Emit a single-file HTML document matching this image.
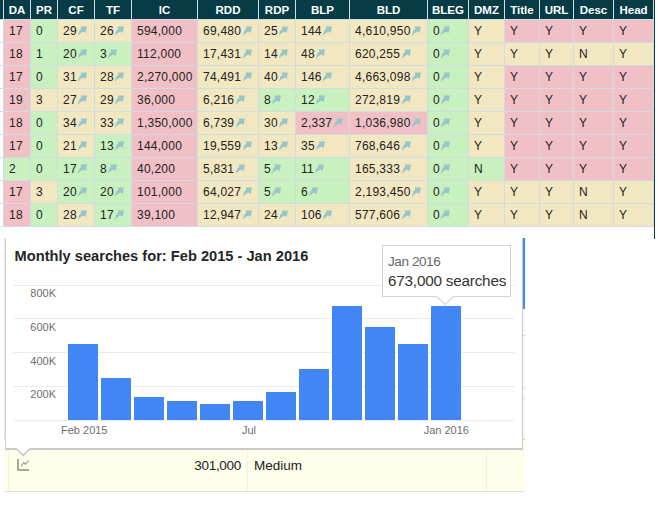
<!DOCTYPE html>
<html><head><meta charset="utf-8"><style>
*{margin:0;padding:0;box-sizing:border-box}
html,body{width:658px;height:514px;overflow:hidden;background:#fff;font-family:"Liberation Sans",sans-serif;position:relative}
.a{position:absolute}
.h{position:absolute;top:0;height:19px;background:#073c47;color:#fff;font-weight:bold;font-size:11.5px;line-height:20px;text-align:center;white-space:nowrap}
.c{position:absolute;height:22px;font-size:12px;line-height:22px;color:#222;padding-left:5px;letter-spacing:0.25px;white-space:nowrap}
.ar{display:inline-block;vertical-align:top;margin-top:6px;margin-left:1.5px}
</style></head><body>

<div class="a" style="left:0;top:0;width:654px;height:227px;background:#d0dbe2"></div>
<div class="a" style="left:0;top:0;width:3px;height:19px;background:#073c47"></div>
<div class="a" style="left:654px;top:0;width:1px;height:239px;background:#073c47"></div>
<div class="h" style="left:4px;width:26px">DA</div>
<div class="h" style="left:31px;width:26px">PR</div>
<div class="h" style="left:58px;width:36px">CF</div>
<div class="h" style="left:95px;width:36px">TF</div>
<div class="h" style="left:132px;width:65px">IC</div>
<div class="h" style="left:198px;width:60px">RDD</div>
<div class="h" style="left:259px;width:36px">RDP</div>
<div class="h" style="left:296px;width:53px">BLP</div>
<div class="h" style="left:350px;width:77px">BLD</div>
<div class="h" style="left:428px;width:40px">BLEG</div>
<div class="h" style="left:469px;width:35px">DMZ</div>
<div class="h" style="left:505px;width:34px">Title</div>
<div class="h" style="left:540px;width:33px">URL</div>
<div class="h" style="left:574px;width:39px">Desc</div>
<div class="h" style="left:614px;width:39px">Head</div>
<div class="a" style="left:0;top:20px;width:3px;height:22px;background:#fff"></div>
<div class="c" style="left:4px;top:20px;width:26px;background:#f1c0c7">17</div>
<div class="c" style="left:31px;top:20px;width:26px;background:#c9f1c0">0</div>
<div class="c" style="left:58px;top:20px;width:36px;background:#f1e7c0">29<svg class="ar" width="10" height="10" viewBox="0 0 10 10"><path d="M2.5,0.5 L9,0.5 L7.6,7 L5.5,5.5 C3.8,6.2 1.6,7.5 0.3,9.9 C0.1,6.5 1.5,4.1 3.4,2.6 Z" fill="#98c5c8"/></svg></div>
<div class="c" style="left:95px;top:20px;width:36px;background:#f1e7c0">26<svg class="ar" width="10" height="10" viewBox="0 0 10 10"><path d="M2.5,0.5 L9,0.5 L7.6,7 L5.5,5.5 C3.8,6.2 1.6,7.5 0.3,9.9 C0.1,6.5 1.5,4.1 3.4,2.6 Z" fill="#98c5c8"/></svg></div>
<div class="c" style="left:132px;top:20px;width:65px;background:#f1c0c7">594,000</div>
<div class="c" style="left:198px;top:20px;width:60px;background:#f1e7c0">69,480<svg class="ar" width="10" height="10" viewBox="0 0 10 10"><path d="M2.5,0.5 L9,0.5 L7.6,7 L5.5,5.5 C3.8,6.2 1.6,7.5 0.3,9.9 C0.1,6.5 1.5,4.1 3.4,2.6 Z" fill="#98c5c8"/></svg></div>
<div class="c" style="left:259px;top:20px;width:36px;background:#f1e7c0">25<svg class="ar" width="10" height="10" viewBox="0 0 10 10"><path d="M2.5,0.5 L9,0.5 L7.6,7 L5.5,5.5 C3.8,6.2 1.6,7.5 0.3,9.9 C0.1,6.5 1.5,4.1 3.4,2.6 Z" fill="#98c5c8"/></svg></div>
<div class="c" style="left:296px;top:20px;width:53px;background:#f1e7c0">144<svg class="ar" width="10" height="10" viewBox="0 0 10 10"><path d="M2.5,0.5 L9,0.5 L7.6,7 L5.5,5.5 C3.8,6.2 1.6,7.5 0.3,9.9 C0.1,6.5 1.5,4.1 3.4,2.6 Z" fill="#98c5c8"/></svg></div>
<div class="c" style="left:350px;top:20px;width:77px;background:#f1e7c0">4,610,950<svg class="ar" width="10" height="10" viewBox="0 0 10 10"><path d="M2.5,0.5 L9,0.5 L7.6,7 L5.5,5.5 C3.8,6.2 1.6,7.5 0.3,9.9 C0.1,6.5 1.5,4.1 3.4,2.6 Z" fill="#98c5c8"/></svg></div>
<div class="c" style="left:428px;top:20px;width:40px;background:#c9f1c0">0<svg class="ar" width="10" height="10" viewBox="0 0 10 10"><path d="M2.5,0.5 L9,0.5 L7.6,7 L5.5,5.5 C3.8,6.2 1.6,7.5 0.3,9.9 C0.1,6.5 1.5,4.1 3.4,2.6 Z" fill="#98c5c8"/></svg></div>
<div class="c" style="left:469px;top:20px;width:35px;background:#f1e7c0">Y</div>
<div class="c" style="left:505px;top:20px;width:34px;background:#f1c0c7">Y</div>
<div class="c" style="left:540px;top:20px;width:33px;background:#f1c0c7">Y</div>
<div class="c" style="left:574px;top:20px;width:39px;background:#f1c0c7">Y</div>
<div class="c" style="left:614px;top:20px;width:39px;background:#f1c0c7">Y</div>
<div class="a" style="left:0;top:43px;width:3px;height:22px;background:#fff"></div>
<div class="c" style="left:4px;top:43px;width:26px;background:#f1c0c7">18</div>
<div class="c" style="left:31px;top:43px;width:26px;background:#c9f1c0">1</div>
<div class="c" style="left:58px;top:43px;width:36px;background:#c9f1c0">20<svg class="ar" width="10" height="10" viewBox="0 0 10 10"><path d="M2.5,0.5 L9,0.5 L7.6,7 L5.5,5.5 C3.8,6.2 1.6,7.5 0.3,9.9 C0.1,6.5 1.5,4.1 3.4,2.6 Z" fill="#98c5c8"/></svg></div>
<div class="c" style="left:95px;top:43px;width:36px;background:#c9f1c0">3<svg class="ar" width="10" height="10" viewBox="0 0 10 10"><path d="M2.5,0.5 L9,0.5 L7.6,7 L5.5,5.5 C3.8,6.2 1.6,7.5 0.3,9.9 C0.1,6.5 1.5,4.1 3.4,2.6 Z" fill="#98c5c8"/></svg></div>
<div class="c" style="left:132px;top:43px;width:65px;background:#f1c0c7">112,000</div>
<div class="c" style="left:198px;top:43px;width:60px;background:#f1e7c0">17,431<svg class="ar" width="10" height="10" viewBox="0 0 10 10"><path d="M2.5,0.5 L9,0.5 L7.6,7 L5.5,5.5 C3.8,6.2 1.6,7.5 0.3,9.9 C0.1,6.5 1.5,4.1 3.4,2.6 Z" fill="#98c5c8"/></svg></div>
<div class="c" style="left:259px;top:43px;width:36px;background:#f1e7c0">14<svg class="ar" width="10" height="10" viewBox="0 0 10 10"><path d="M2.5,0.5 L9,0.5 L7.6,7 L5.5,5.5 C3.8,6.2 1.6,7.5 0.3,9.9 C0.1,6.5 1.5,4.1 3.4,2.6 Z" fill="#98c5c8"/></svg></div>
<div class="c" style="left:296px;top:43px;width:53px;background:#f1e7c0">48<svg class="ar" width="10" height="10" viewBox="0 0 10 10"><path d="M2.5,0.5 L9,0.5 L7.6,7 L5.5,5.5 C3.8,6.2 1.6,7.5 0.3,9.9 C0.1,6.5 1.5,4.1 3.4,2.6 Z" fill="#98c5c8"/></svg></div>
<div class="c" style="left:350px;top:43px;width:77px;background:#f1e7c0">620,255<svg class="ar" width="10" height="10" viewBox="0 0 10 10"><path d="M2.5,0.5 L9,0.5 L7.6,7 L5.5,5.5 C3.8,6.2 1.6,7.5 0.3,9.9 C0.1,6.5 1.5,4.1 3.4,2.6 Z" fill="#98c5c8"/></svg></div>
<div class="c" style="left:428px;top:43px;width:40px;background:#c9f1c0">0<svg class="ar" width="10" height="10" viewBox="0 0 10 10"><path d="M2.5,0.5 L9,0.5 L7.6,7 L5.5,5.5 C3.8,6.2 1.6,7.5 0.3,9.9 C0.1,6.5 1.5,4.1 3.4,2.6 Z" fill="#98c5c8"/></svg></div>
<div class="c" style="left:469px;top:43px;width:35px;background:#f1e7c0">Y</div>
<div class="c" style="left:505px;top:43px;width:34px;background:#f1e7c0">Y</div>
<div class="c" style="left:540px;top:43px;width:33px;background:#f1e7c0">Y</div>
<div class="c" style="left:574px;top:43px;width:39px;background:#f1e7c0">N</div>
<div class="c" style="left:614px;top:43px;width:39px;background:#f1e7c0">Y</div>
<div class="a" style="left:0;top:66px;width:3px;height:22px;background:#fff"></div>
<div class="c" style="left:4px;top:66px;width:26px;background:#f1c0c7">17</div>
<div class="c" style="left:31px;top:66px;width:26px;background:#c9f1c0">0</div>
<div class="c" style="left:58px;top:66px;width:36px;background:#f1e7c0">31<svg class="ar" width="10" height="10" viewBox="0 0 10 10"><path d="M2.5,0.5 L9,0.5 L7.6,7 L5.5,5.5 C3.8,6.2 1.6,7.5 0.3,9.9 C0.1,6.5 1.5,4.1 3.4,2.6 Z" fill="#98c5c8"/></svg></div>
<div class="c" style="left:95px;top:66px;width:36px;background:#f1e7c0">28<svg class="ar" width="10" height="10" viewBox="0 0 10 10"><path d="M2.5,0.5 L9,0.5 L7.6,7 L5.5,5.5 C3.8,6.2 1.6,7.5 0.3,9.9 C0.1,6.5 1.5,4.1 3.4,2.6 Z" fill="#98c5c8"/></svg></div>
<div class="c" style="left:132px;top:66px;width:65px;background:#f1c0c7">2,270,000</div>
<div class="c" style="left:198px;top:66px;width:60px;background:#f1e7c0">74,491<svg class="ar" width="10" height="10" viewBox="0 0 10 10"><path d="M2.5,0.5 L9,0.5 L7.6,7 L5.5,5.5 C3.8,6.2 1.6,7.5 0.3,9.9 C0.1,6.5 1.5,4.1 3.4,2.6 Z" fill="#98c5c8"/></svg></div>
<div class="c" style="left:259px;top:66px;width:36px;background:#f1e7c0">40<svg class="ar" width="10" height="10" viewBox="0 0 10 10"><path d="M2.5,0.5 L9,0.5 L7.6,7 L5.5,5.5 C3.8,6.2 1.6,7.5 0.3,9.9 C0.1,6.5 1.5,4.1 3.4,2.6 Z" fill="#98c5c8"/></svg></div>
<div class="c" style="left:296px;top:66px;width:53px;background:#f1e7c0">146<svg class="ar" width="10" height="10" viewBox="0 0 10 10"><path d="M2.5,0.5 L9,0.5 L7.6,7 L5.5,5.5 C3.8,6.2 1.6,7.5 0.3,9.9 C0.1,6.5 1.5,4.1 3.4,2.6 Z" fill="#98c5c8"/></svg></div>
<div class="c" style="left:350px;top:66px;width:77px;background:#f1e7c0">4,663,098<svg class="ar" width="10" height="10" viewBox="0 0 10 10"><path d="M2.5,0.5 L9,0.5 L7.6,7 L5.5,5.5 C3.8,6.2 1.6,7.5 0.3,9.9 C0.1,6.5 1.5,4.1 3.4,2.6 Z" fill="#98c5c8"/></svg></div>
<div class="c" style="left:428px;top:66px;width:40px;background:#c9f1c0">0<svg class="ar" width="10" height="10" viewBox="0 0 10 10"><path d="M2.5,0.5 L9,0.5 L7.6,7 L5.5,5.5 C3.8,6.2 1.6,7.5 0.3,9.9 C0.1,6.5 1.5,4.1 3.4,2.6 Z" fill="#98c5c8"/></svg></div>
<div class="c" style="left:469px;top:66px;width:35px;background:#f1e7c0">Y</div>
<div class="c" style="left:505px;top:66px;width:34px;background:#f1c0c7">Y</div>
<div class="c" style="left:540px;top:66px;width:33px;background:#f1c0c7">Y</div>
<div class="c" style="left:574px;top:66px;width:39px;background:#f1c0c7">Y</div>
<div class="c" style="left:614px;top:66px;width:39px;background:#f1c0c7">Y</div>
<div class="a" style="left:0;top:89px;width:3px;height:22px;background:#fff"></div>
<div class="c" style="left:4px;top:89px;width:26px;background:#f1c0c7">19</div>
<div class="c" style="left:31px;top:89px;width:26px;background:#f1e7c0">3</div>
<div class="c" style="left:58px;top:89px;width:36px;background:#f1e7c0">27<svg class="ar" width="10" height="10" viewBox="0 0 10 10"><path d="M2.5,0.5 L9,0.5 L7.6,7 L5.5,5.5 C3.8,6.2 1.6,7.5 0.3,9.9 C0.1,6.5 1.5,4.1 3.4,2.6 Z" fill="#98c5c8"/></svg></div>
<div class="c" style="left:95px;top:89px;width:36px;background:#f1e7c0">29<svg class="ar" width="10" height="10" viewBox="0 0 10 10"><path d="M2.5,0.5 L9,0.5 L7.6,7 L5.5,5.5 C3.8,6.2 1.6,7.5 0.3,9.9 C0.1,6.5 1.5,4.1 3.4,2.6 Z" fill="#98c5c8"/></svg></div>
<div class="c" style="left:132px;top:89px;width:65px;background:#f1c0c7">36,000</div>
<div class="c" style="left:198px;top:89px;width:60px;background:#f1e7c0">6,216<svg class="ar" width="10" height="10" viewBox="0 0 10 10"><path d="M2.5,0.5 L9,0.5 L7.6,7 L5.5,5.5 C3.8,6.2 1.6,7.5 0.3,9.9 C0.1,6.5 1.5,4.1 3.4,2.6 Z" fill="#98c5c8"/></svg></div>
<div class="c" style="left:259px;top:89px;width:36px;background:#c9f1c0">8<svg class="ar" width="10" height="10" viewBox="0 0 10 10"><path d="M2.5,0.5 L9,0.5 L7.6,7 L5.5,5.5 C3.8,6.2 1.6,7.5 0.3,9.9 C0.1,6.5 1.5,4.1 3.4,2.6 Z" fill="#98c5c8"/></svg></div>
<div class="c" style="left:296px;top:89px;width:53px;background:#c9f1c0">12<svg class="ar" width="10" height="10" viewBox="0 0 10 10"><path d="M2.5,0.5 L9,0.5 L7.6,7 L5.5,5.5 C3.8,6.2 1.6,7.5 0.3,9.9 C0.1,6.5 1.5,4.1 3.4,2.6 Z" fill="#98c5c8"/></svg></div>
<div class="c" style="left:350px;top:89px;width:77px;background:#f1e7c0">272,819<svg class="ar" width="10" height="10" viewBox="0 0 10 10"><path d="M2.5,0.5 L9,0.5 L7.6,7 L5.5,5.5 C3.8,6.2 1.6,7.5 0.3,9.9 C0.1,6.5 1.5,4.1 3.4,2.6 Z" fill="#98c5c8"/></svg></div>
<div class="c" style="left:428px;top:89px;width:40px;background:#c9f1c0">0<svg class="ar" width="10" height="10" viewBox="0 0 10 10"><path d="M2.5,0.5 L9,0.5 L7.6,7 L5.5,5.5 C3.8,6.2 1.6,7.5 0.3,9.9 C0.1,6.5 1.5,4.1 3.4,2.6 Z" fill="#98c5c8"/></svg></div>
<div class="c" style="left:469px;top:89px;width:35px;background:#f1e7c0">Y</div>
<div class="c" style="left:505px;top:89px;width:34px;background:#f1c0c7">Y</div>
<div class="c" style="left:540px;top:89px;width:33px;background:#f1c0c7">Y</div>
<div class="c" style="left:574px;top:89px;width:39px;background:#f1c0c7">Y</div>
<div class="c" style="left:614px;top:89px;width:39px;background:#f1c0c7">Y</div>
<div class="a" style="left:0;top:112px;width:3px;height:22px;background:#fff"></div>
<div class="c" style="left:4px;top:112px;width:26px;background:#f1c0c7">18</div>
<div class="c" style="left:31px;top:112px;width:26px;background:#c9f1c0">0</div>
<div class="c" style="left:58px;top:112px;width:36px;background:#f1e7c0">34<svg class="ar" width="10" height="10" viewBox="0 0 10 10"><path d="M2.5,0.5 L9,0.5 L7.6,7 L5.5,5.5 C3.8,6.2 1.6,7.5 0.3,9.9 C0.1,6.5 1.5,4.1 3.4,2.6 Z" fill="#98c5c8"/></svg></div>
<div class="c" style="left:95px;top:112px;width:36px;background:#f1e7c0">33<svg class="ar" width="10" height="10" viewBox="0 0 10 10"><path d="M2.5,0.5 L9,0.5 L7.6,7 L5.5,5.5 C3.8,6.2 1.6,7.5 0.3,9.9 C0.1,6.5 1.5,4.1 3.4,2.6 Z" fill="#98c5c8"/></svg></div>
<div class="c" style="left:132px;top:112px;width:65px;background:#f1c0c7">1,350,000</div>
<div class="c" style="left:198px;top:112px;width:60px;background:#f1e7c0">6,739<svg class="ar" width="10" height="10" viewBox="0 0 10 10"><path d="M2.5,0.5 L9,0.5 L7.6,7 L5.5,5.5 C3.8,6.2 1.6,7.5 0.3,9.9 C0.1,6.5 1.5,4.1 3.4,2.6 Z" fill="#98c5c8"/></svg></div>
<div class="c" style="left:259px;top:112px;width:36px;background:#f1e7c0">30<svg class="ar" width="10" height="10" viewBox="0 0 10 10"><path d="M2.5,0.5 L9,0.5 L7.6,7 L5.5,5.5 C3.8,6.2 1.6,7.5 0.3,9.9 C0.1,6.5 1.5,4.1 3.4,2.6 Z" fill="#98c5c8"/></svg></div>
<div class="c" style="left:296px;top:112px;width:53px;background:#f1c0c7">2,337<svg class="ar" width="10" height="10" viewBox="0 0 10 10"><path d="M2.5,0.5 L9,0.5 L7.6,7 L5.5,5.5 C3.8,6.2 1.6,7.5 0.3,9.9 C0.1,6.5 1.5,4.1 3.4,2.6 Z" fill="#98c5c8"/></svg></div>
<div class="c" style="left:350px;top:112px;width:77px;background:#f1c0c7">1,036,980<svg class="ar" width="10" height="10" viewBox="0 0 10 10"><path d="M2.5,0.5 L9,0.5 L7.6,7 L5.5,5.5 C3.8,6.2 1.6,7.5 0.3,9.9 C0.1,6.5 1.5,4.1 3.4,2.6 Z" fill="#98c5c8"/></svg></div>
<div class="c" style="left:428px;top:112px;width:40px;background:#c9f1c0">0<svg class="ar" width="10" height="10" viewBox="0 0 10 10"><path d="M2.5,0.5 L9,0.5 L7.6,7 L5.5,5.5 C3.8,6.2 1.6,7.5 0.3,9.9 C0.1,6.5 1.5,4.1 3.4,2.6 Z" fill="#98c5c8"/></svg></div>
<div class="c" style="left:469px;top:112px;width:35px;background:#f1e7c0">Y</div>
<div class="c" style="left:505px;top:112px;width:34px;background:#f1c0c7">Y</div>
<div class="c" style="left:540px;top:112px;width:33px;background:#f1c0c7">Y</div>
<div class="c" style="left:574px;top:112px;width:39px;background:#f1c0c7">Y</div>
<div class="c" style="left:614px;top:112px;width:39px;background:#f1c0c7">Y</div>
<div class="a" style="left:0;top:135px;width:3px;height:22px;background:#fff"></div>
<div class="c" style="left:4px;top:135px;width:26px;background:#f1c0c7">17</div>
<div class="c" style="left:31px;top:135px;width:26px;background:#c9f1c0">0</div>
<div class="c" style="left:58px;top:135px;width:36px;background:#f1e7c0">21<svg class="ar" width="10" height="10" viewBox="0 0 10 10"><path d="M2.5,0.5 L9,0.5 L7.6,7 L5.5,5.5 C3.8,6.2 1.6,7.5 0.3,9.9 C0.1,6.5 1.5,4.1 3.4,2.6 Z" fill="#98c5c8"/></svg></div>
<div class="c" style="left:95px;top:135px;width:36px;background:#c9f1c0">13<svg class="ar" width="10" height="10" viewBox="0 0 10 10"><path d="M2.5,0.5 L9,0.5 L7.6,7 L5.5,5.5 C3.8,6.2 1.6,7.5 0.3,9.9 C0.1,6.5 1.5,4.1 3.4,2.6 Z" fill="#98c5c8"/></svg></div>
<div class="c" style="left:132px;top:135px;width:65px;background:#f1c0c7">144,000</div>
<div class="c" style="left:198px;top:135px;width:60px;background:#f1e7c0">19,559<svg class="ar" width="10" height="10" viewBox="0 0 10 10"><path d="M2.5,0.5 L9,0.5 L7.6,7 L5.5,5.5 C3.8,6.2 1.6,7.5 0.3,9.9 C0.1,6.5 1.5,4.1 3.4,2.6 Z" fill="#98c5c8"/></svg></div>
<div class="c" style="left:259px;top:135px;width:36px;background:#f1e7c0">13<svg class="ar" width="10" height="10" viewBox="0 0 10 10"><path d="M2.5,0.5 L9,0.5 L7.6,7 L5.5,5.5 C3.8,6.2 1.6,7.5 0.3,9.9 C0.1,6.5 1.5,4.1 3.4,2.6 Z" fill="#98c5c8"/></svg></div>
<div class="c" style="left:296px;top:135px;width:53px;background:#f1e7c0">35<svg class="ar" width="10" height="10" viewBox="0 0 10 10"><path d="M2.5,0.5 L9,0.5 L7.6,7 L5.5,5.5 C3.8,6.2 1.6,7.5 0.3,9.9 C0.1,6.5 1.5,4.1 3.4,2.6 Z" fill="#98c5c8"/></svg></div>
<div class="c" style="left:350px;top:135px;width:77px;background:#f1e7c0">768,646<svg class="ar" width="10" height="10" viewBox="0 0 10 10"><path d="M2.5,0.5 L9,0.5 L7.6,7 L5.5,5.5 C3.8,6.2 1.6,7.5 0.3,9.9 C0.1,6.5 1.5,4.1 3.4,2.6 Z" fill="#98c5c8"/></svg></div>
<div class="c" style="left:428px;top:135px;width:40px;background:#c9f1c0">0<svg class="ar" width="10" height="10" viewBox="0 0 10 10"><path d="M2.5,0.5 L9,0.5 L7.6,7 L5.5,5.5 C3.8,6.2 1.6,7.5 0.3,9.9 C0.1,6.5 1.5,4.1 3.4,2.6 Z" fill="#98c5c8"/></svg></div>
<div class="c" style="left:469px;top:135px;width:35px;background:#f1e7c0">Y</div>
<div class="c" style="left:505px;top:135px;width:34px;background:#f1c0c7">Y</div>
<div class="c" style="left:540px;top:135px;width:33px;background:#f1c0c7">Y</div>
<div class="c" style="left:574px;top:135px;width:39px;background:#f1c0c7">Y</div>
<div class="c" style="left:614px;top:135px;width:39px;background:#f1c0c7">Y</div>
<div class="a" style="left:0;top:158px;width:3px;height:22px;background:#fff"></div>
<div class="c" style="left:4px;top:158px;width:26px;background:#c9f1c0">2</div>
<div class="c" style="left:31px;top:158px;width:26px;background:#c9f1c0">0</div>
<div class="c" style="left:58px;top:158px;width:36px;background:#c9f1c0">17<svg class="ar" width="10" height="10" viewBox="0 0 10 10"><path d="M2.5,0.5 L9,0.5 L7.6,7 L5.5,5.5 C3.8,6.2 1.6,7.5 0.3,9.9 C0.1,6.5 1.5,4.1 3.4,2.6 Z" fill="#98c5c8"/></svg></div>
<div class="c" style="left:95px;top:158px;width:36px;background:#c9f1c0">8<svg class="ar" width="10" height="10" viewBox="0 0 10 10"><path d="M2.5,0.5 L9,0.5 L7.6,7 L5.5,5.5 C3.8,6.2 1.6,7.5 0.3,9.9 C0.1,6.5 1.5,4.1 3.4,2.6 Z" fill="#98c5c8"/></svg></div>
<div class="c" style="left:132px;top:158px;width:65px;background:#f1c0c7">40,200</div>
<div class="c" style="left:198px;top:158px;width:60px;background:#f1e7c0">5,831<svg class="ar" width="10" height="10" viewBox="0 0 10 10"><path d="M2.5,0.5 L9,0.5 L7.6,7 L5.5,5.5 C3.8,6.2 1.6,7.5 0.3,9.9 C0.1,6.5 1.5,4.1 3.4,2.6 Z" fill="#98c5c8"/></svg></div>
<div class="c" style="left:259px;top:158px;width:36px;background:#c9f1c0">5<svg class="ar" width="10" height="10" viewBox="0 0 10 10"><path d="M2.5,0.5 L9,0.5 L7.6,7 L5.5,5.5 C3.8,6.2 1.6,7.5 0.3,9.9 C0.1,6.5 1.5,4.1 3.4,2.6 Z" fill="#98c5c8"/></svg></div>
<div class="c" style="left:296px;top:158px;width:53px;background:#c9f1c0">11<svg class="ar" width="10" height="10" viewBox="0 0 10 10"><path d="M2.5,0.5 L9,0.5 L7.6,7 L5.5,5.5 C3.8,6.2 1.6,7.5 0.3,9.9 C0.1,6.5 1.5,4.1 3.4,2.6 Z" fill="#98c5c8"/></svg></div>
<div class="c" style="left:350px;top:158px;width:77px;background:#f1e7c0">165,333<svg class="ar" width="10" height="10" viewBox="0 0 10 10"><path d="M2.5,0.5 L9,0.5 L7.6,7 L5.5,5.5 C3.8,6.2 1.6,7.5 0.3,9.9 C0.1,6.5 1.5,4.1 3.4,2.6 Z" fill="#98c5c8"/></svg></div>
<div class="c" style="left:428px;top:158px;width:40px;background:#c9f1c0">0<svg class="ar" width="10" height="10" viewBox="0 0 10 10"><path d="M2.5,0.5 L9,0.5 L7.6,7 L5.5,5.5 C3.8,6.2 1.6,7.5 0.3,9.9 C0.1,6.5 1.5,4.1 3.4,2.6 Z" fill="#98c5c8"/></svg></div>
<div class="c" style="left:469px;top:158px;width:35px;background:#c9f1c0">N</div>
<div class="c" style="left:505px;top:158px;width:34px;background:#f1c0c7">Y</div>
<div class="c" style="left:540px;top:158px;width:33px;background:#f1c0c7">Y</div>
<div class="c" style="left:574px;top:158px;width:39px;background:#f1c0c7">Y</div>
<div class="c" style="left:614px;top:158px;width:39px;background:#f1c0c7">Y</div>
<div class="a" style="left:0;top:181px;width:3px;height:22px;background:#fff"></div>
<div class="c" style="left:4px;top:181px;width:26px;background:#f1c0c7">17</div>
<div class="c" style="left:31px;top:181px;width:26px;background:#f1e7c0">3</div>
<div class="c" style="left:58px;top:181px;width:36px;background:#c9f1c0">20<svg class="ar" width="10" height="10" viewBox="0 0 10 10"><path d="M2.5,0.5 L9,0.5 L7.6,7 L5.5,5.5 C3.8,6.2 1.6,7.5 0.3,9.9 C0.1,6.5 1.5,4.1 3.4,2.6 Z" fill="#98c5c8"/></svg></div>
<div class="c" style="left:95px;top:181px;width:36px;background:#c9f1c0">20<svg class="ar" width="10" height="10" viewBox="0 0 10 10"><path d="M2.5,0.5 L9,0.5 L7.6,7 L5.5,5.5 C3.8,6.2 1.6,7.5 0.3,9.9 C0.1,6.5 1.5,4.1 3.4,2.6 Z" fill="#98c5c8"/></svg></div>
<div class="c" style="left:132px;top:181px;width:65px;background:#f1c0c7">101,000</div>
<div class="c" style="left:198px;top:181px;width:60px;background:#f1e7c0">64,027<svg class="ar" width="10" height="10" viewBox="0 0 10 10"><path d="M2.5,0.5 L9,0.5 L7.6,7 L5.5,5.5 C3.8,6.2 1.6,7.5 0.3,9.9 C0.1,6.5 1.5,4.1 3.4,2.6 Z" fill="#98c5c8"/></svg></div>
<div class="c" style="left:259px;top:181px;width:36px;background:#c9f1c0">5<svg class="ar" width="10" height="10" viewBox="0 0 10 10"><path d="M2.5,0.5 L9,0.5 L7.6,7 L5.5,5.5 C3.8,6.2 1.6,7.5 0.3,9.9 C0.1,6.5 1.5,4.1 3.4,2.6 Z" fill="#98c5c8"/></svg></div>
<div class="c" style="left:296px;top:181px;width:53px;background:#c9f1c0">6<svg class="ar" width="10" height="10" viewBox="0 0 10 10"><path d="M2.5,0.5 L9,0.5 L7.6,7 L5.5,5.5 C3.8,6.2 1.6,7.5 0.3,9.9 C0.1,6.5 1.5,4.1 3.4,2.6 Z" fill="#98c5c8"/></svg></div>
<div class="c" style="left:350px;top:181px;width:77px;background:#f1e7c0">2,193,450<svg class="ar" width="10" height="10" viewBox="0 0 10 10"><path d="M2.5,0.5 L9,0.5 L7.6,7 L5.5,5.5 C3.8,6.2 1.6,7.5 0.3,9.9 C0.1,6.5 1.5,4.1 3.4,2.6 Z" fill="#98c5c8"/></svg></div>
<div class="c" style="left:428px;top:181px;width:40px;background:#c9f1c0">0<svg class="ar" width="10" height="10" viewBox="0 0 10 10"><path d="M2.5,0.5 L9,0.5 L7.6,7 L5.5,5.5 C3.8,6.2 1.6,7.5 0.3,9.9 C0.1,6.5 1.5,4.1 3.4,2.6 Z" fill="#98c5c8"/></svg></div>
<div class="c" style="left:469px;top:181px;width:35px;background:#f1e7c0">Y</div>
<div class="c" style="left:505px;top:181px;width:34px;background:#f1e7c0">Y</div>
<div class="c" style="left:540px;top:181px;width:33px;background:#f1e7c0">Y</div>
<div class="c" style="left:574px;top:181px;width:39px;background:#f1e7c0">N</div>
<div class="c" style="left:614px;top:181px;width:39px;background:#f1e7c0">Y</div>
<div class="a" style="left:0;top:204px;width:3px;height:22px;background:#fff"></div>
<div class="c" style="left:4px;top:204px;width:26px;background:#f1c0c7">18</div>
<div class="c" style="left:31px;top:204px;width:26px;background:#c9f1c0">0</div>
<div class="c" style="left:58px;top:204px;width:36px;background:#f1e7c0">28<svg class="ar" width="10" height="10" viewBox="0 0 10 10"><path d="M2.5,0.5 L9,0.5 L7.6,7 L5.5,5.5 C3.8,6.2 1.6,7.5 0.3,9.9 C0.1,6.5 1.5,4.1 3.4,2.6 Z" fill="#98c5c8"/></svg></div>
<div class="c" style="left:95px;top:204px;width:36px;background:#c9f1c0">17<svg class="ar" width="10" height="10" viewBox="0 0 10 10"><path d="M2.5,0.5 L9,0.5 L7.6,7 L5.5,5.5 C3.8,6.2 1.6,7.5 0.3,9.9 C0.1,6.5 1.5,4.1 3.4,2.6 Z" fill="#98c5c8"/></svg></div>
<div class="c" style="left:132px;top:204px;width:65px;background:#f1c0c7">39,100</div>
<div class="c" style="left:198px;top:204px;width:60px;background:#f1e7c0">12,947<svg class="ar" width="10" height="10" viewBox="0 0 10 10"><path d="M2.5,0.5 L9,0.5 L7.6,7 L5.5,5.5 C3.8,6.2 1.6,7.5 0.3,9.9 C0.1,6.5 1.5,4.1 3.4,2.6 Z" fill="#98c5c8"/></svg></div>
<div class="c" style="left:259px;top:204px;width:36px;background:#f1e7c0">24<svg class="ar" width="10" height="10" viewBox="0 0 10 10"><path d="M2.5,0.5 L9,0.5 L7.6,7 L5.5,5.5 C3.8,6.2 1.6,7.5 0.3,9.9 C0.1,6.5 1.5,4.1 3.4,2.6 Z" fill="#98c5c8"/></svg></div>
<div class="c" style="left:296px;top:204px;width:53px;background:#f1e7c0">106<svg class="ar" width="10" height="10" viewBox="0 0 10 10"><path d="M2.5,0.5 L9,0.5 L7.6,7 L5.5,5.5 C3.8,6.2 1.6,7.5 0.3,9.9 C0.1,6.5 1.5,4.1 3.4,2.6 Z" fill="#98c5c8"/></svg></div>
<div class="c" style="left:350px;top:204px;width:77px;background:#f1e7c0">577,606<svg class="ar" width="10" height="10" viewBox="0 0 10 10"><path d="M2.5,0.5 L9,0.5 L7.6,7 L5.5,5.5 C3.8,6.2 1.6,7.5 0.3,9.9 C0.1,6.5 1.5,4.1 3.4,2.6 Z" fill="#98c5c8"/></svg></div>
<div class="c" style="left:428px;top:204px;width:40px;background:#c9f1c0">0<svg class="ar" width="10" height="10" viewBox="0 0 10 10"><path d="M2.5,0.5 L9,0.5 L7.6,7 L5.5,5.5 C3.8,6.2 1.6,7.5 0.3,9.9 C0.1,6.5 1.5,4.1 3.4,2.6 Z" fill="#98c5c8"/></svg></div>
<div class="c" style="left:469px;top:204px;width:35px;background:#f1e7c0">Y</div>
<div class="c" style="left:505px;top:204px;width:34px;background:#f1e7c0">Y</div>
<div class="c" style="left:540px;top:204px;width:33px;background:#f1e7c0">Y</div>
<div class="c" style="left:574px;top:204px;width:39px;background:#f1e7c0">N</div>
<div class="c" style="left:614px;top:204px;width:39px;background:#f1e7c0">Y</div>
<!-- yellow row under popup -->
<div class="a" style="left:4px;top:440px;width:521px;height:51px;background:#fefeeb"></div>
<div class="a" style="left:4px;top:439px;width:1px;height:1px;background:#d6d6d6"></div>
<div class="a" style="left:523px;top:439px;width:2px;height:1px;background:#d6d6d6"></div>
<div class="a" style="left:4px;top:491px;width:521px;height:1px;background:#e2e2dc"></div>
<div class="a" style="left:8px;top:439px;width:1px;height:52px;background:#efefec"></div>
<div class="a" style="left:247px;top:439px;width:1px;height:52px;background:#efefec"></div>
<div class="a" style="left:486px;top:439px;width:1px;height:52px;background:#efefec"></div>
<div class="a" style="left:150px;top:456.5px;width:91px;text-align:right;font-size:13.5px;letter-spacing:-0.3px;line-height:18px;color:#222">301,000</div>
<div class="a" style="left:254px;top:456.5px;font-size:13.5px;line-height:18px;color:#222">Medium</div>
<svg class="a" style="left:16px;top:458px" width="14" height="14" viewBox="0 0 14 14">
<path d="M2,1 V12 H13" fill="none" stroke="#a8a898" stroke-width="2"/>
<path d="M5,8.4 L7.8,4.3 L9.5,6.3 L12.7,2.6" fill="none" stroke="#a8a898" stroke-width="1.3"/>
</svg>
<!-- popup -->
<div class="a" style="left:4px;top:238px;width:1px;height:201px;background:#ededed"></div>
<div class="a" style="left:4px;top:335px;width:1px;height:1px;background:#dadada"></div>
<div class="a" style="left:4px;top:387px;width:1px;height:1px;background:#dadada"></div>
<div class="a" style="left:4px;top:398px;width:1px;height:1px;background:#dadada"></div>
<div class="a" style="left:5px;top:238px;width:518px;height:212px;background:#fff;border-left:1px solid #cfcfcf;border-right:1px solid #c8c8c8;border-bottom:2px solid #c8c8c8"></div>
<svg class="a" style="left:15px;top:448px" width="16" height="10" viewBox="0 0 16 10">
<path d="M1.2,0 L8.2,7 L15.2,0 Z" fill="#fff"/>
<path d="M1.6,1 L8.2,7.4 L14.6,1" fill="none" stroke="#c8c8c8" stroke-width="1.7"/>
</svg>
<div class="a" style="left:523px;top:238px;width:2px;height:71px;background:#4285f4"></div>
<div class="a" style="left:523px;top:309px;width:2px;height:130px;background:#f8f8f8"></div>
<div class="a" style="left:523px;top:335px;width:2px;height:1px;background:#dcdcdc"></div>
<div class="a" style="left:523px;top:387px;width:2px;height:1px;background:#dcdcdc"></div>
<div class="a" style="left:523px;top:398px;width:2px;height:1px;background:#dcdcdc"></div>
<div class="a" style="left:14.6px;top:246px;font-size:14.65px;font-weight:bold;line-height:20px;color:#262626;white-space:nowrap">Monthly searches for: Feb 2015 - Jan 2016</div>
<!-- gridlines -->
<div class="a" style="left:14px;top:285px;width:500px;height:1px;background:#ebebeb"></div>
<div class="a" style="left:14px;top:318px;width:500px;height:1px;background:#ebebeb"></div>
<div class="a" style="left:14px;top:352px;width:500px;height:1px;background:#ebebeb"></div>
<div class="a" style="left:14px;top:386px;width:500px;height:1px;background:#ebebeb"></div>
<div class="a" style="left:14px;top:420px;width:500px;height:1px;background:#ebebeb"></div>
<div class="a" style="left:20px;top:286px;width:36px;text-align:right;font-size:11px;line-height:14px;color:#6e6e6e">800K</div>
<div class="a" style="left:20px;top:320px;width:36px;text-align:right;font-size:11px;line-height:14px;color:#6e6e6e">600K</div>
<div class="a" style="left:20px;top:354px;width:36px;text-align:right;font-size:11px;line-height:14px;color:#6e6e6e">400K</div>
<div class="a" style="left:20px;top:387px;width:36px;text-align:right;font-size:11px;line-height:14px;color:#6e6e6e">200K</div>
<!-- bars -->
<div class="a" style="left:68px;top:344px;width:30px;height:76px;background:#4285f4"></div>
<div class="a" style="left:101px;top:378px;width:30px;height:42px;background:#4285f4"></div>
<div class="a" style="left:134px;top:397px;width:30px;height:23px;background:#4285f4"></div>
<div class="a" style="left:167px;top:401px;width:30px;height:19px;background:#4285f4"></div>
<div class="a" style="left:200px;top:404px;width:30px;height:16px;background:#4285f4"></div>
<div class="a" style="left:233px;top:401px;width:30px;height:19px;background:#4285f4"></div>
<div class="a" style="left:266px;top:392px;width:30px;height:28px;background:#4285f4"></div>
<div class="a" style="left:299px;top:369px;width:30px;height:51px;background:#4285f4"></div>
<div class="a" style="left:332px;top:306px;width:30px;height:114px;background:#4285f4"></div>
<div class="a" style="left:365px;top:327px;width:30px;height:93px;background:#4285f4"></div>
<div class="a" style="left:398px;top:344px;width:30px;height:76px;background:#4285f4"></div>
<div class="a" style="left:431px;top:306px;width:30px;height:114px;background:#4285f4"></div>
<!-- x labels -->
<div class="a" style="left:61px;top:423px;font-size:11px;line-height:14px;color:#6e6e6e;white-space:nowrap">Feb 2015</div>
<div class="a" style="left:242px;top:423px;font-size:11px;line-height:14px;color:#6e6e6e;white-space:nowrap">Jul</div>
<div class="a" style="left:423.7px;top:423px;font-size:11px;line-height:14px;color:#6e6e6e;white-space:nowrap">Jan 2016</div>
<!-- tooltip -->
<div class="a" style="left:382px;top:245px;width:129px;height:52px;background:#fff;border:1px solid #d4d4d4"></div>
<svg class="a" style="left:436px;top:296px" width="18" height="10" viewBox="0 0 18 10">
<path d="M0.8,0.5 L9.3,8.6 L17.3,0.5" fill="#fff" stroke="#d4d4d4" stroke-width="1.1"/>
<rect x="1.6" y="0" width="14.9" height="1.05" fill="#fff"/>
</svg>
<div class="a" style="left:388px;top:254px;font-size:13.6px;line-height:16px;color:#666;letter-spacing:-0.45px;white-space:nowrap">Jan 2016</div>
<div class="a" style="left:388px;top:272px;font-size:15.3px;letter-spacing:-0.22px;line-height:18px;color:#333;white-space:nowrap">673,000 searches</div>

</body></html>
